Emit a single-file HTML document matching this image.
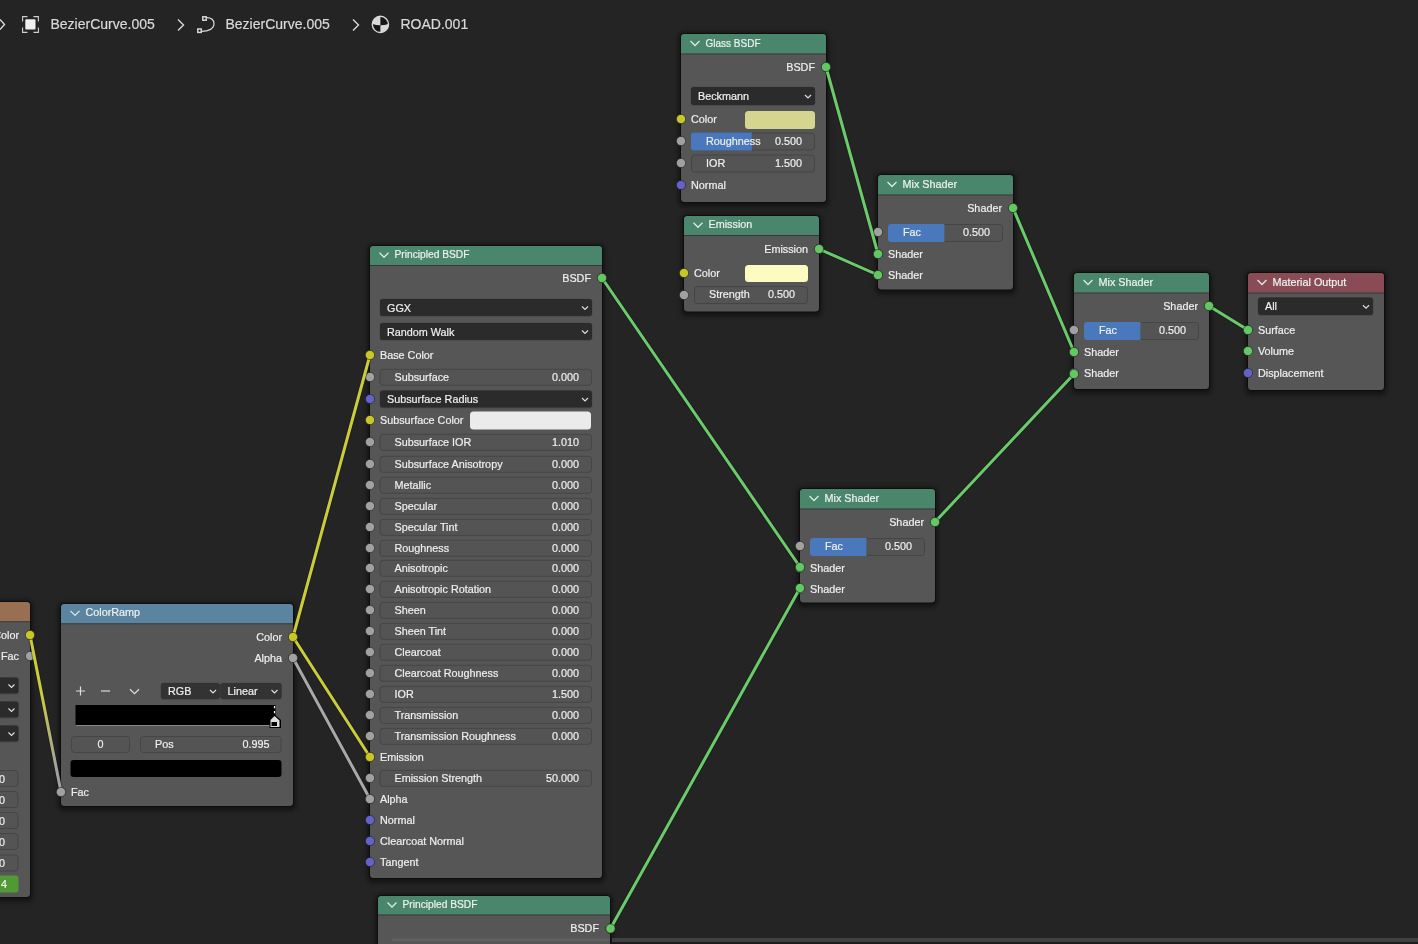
<!DOCTYPE html>
<html><head><meta charset="utf-8"><style>
html,body{margin:0;padding:0;background:#242424;width:1418px;height:944px;overflow:hidden}
svg{display:block;font-family:"Liberation Sans", sans-serif;will-change:transform}
</style></head><body>
<svg width="1418" height="944" viewBox="0 0 1418 944">
<defs><filter id="sh" x="-20%" y="-20%" width="140%" height="140%"><feGaussianBlur stdDeviation="2"/></filter></defs>
<rect width="1418" height="944" fill="#242424"/>
<path d="M0 19.5 L4.5 24.5 L0 29.5" fill="none" stroke="#d9d9d9" stroke-width="1.4"/>
<path d="M22.6 21.5 V16.6 H27.5 M33.5 16.6 H38.4 V21.5 M38.4 27.5 V32.4 H33.5 M27.5 32.4 H22.6 V27.5" fill="none" stroke="#cfcfcf" stroke-width="1.1"/>
<rect x="25.3" y="19.2" width="10.2" height="10.3" rx="0.8" fill="#f0f0f0" />
<text x="50.5" y="29" font-size="14" fill="#d9d9d9" stroke="#d9d9d9" stroke-width="0.2" text-anchor="start" >BezierCurve.005</text>
<path d="M178 19.5 L183.5 25 L178 30.5" fill="none" stroke="#d9d9d9" stroke-width="1.4"/>
<path d="M206.5 17.6 C211.5 17.6 214 20 214 23.8 C214 28.5 209 31.4 201.5 31.4" fill="none" stroke="#d9d9d9" stroke-width="1.2"/>
<rect x="202.8" y="16.8" width="3.4" height="3.4" rx="0" fill="#111" stroke="#d9d9d9" stroke-width="1.5" />
<rect x="197.8" y="29.0" width="3.4" height="3.4" rx="0" fill="#111" stroke="#d9d9d9" stroke-width="1.5" />
<text x="225.5" y="29" font-size="14" fill="#d9d9d9" stroke="#d9d9d9" stroke-width="0.2" text-anchor="start" >BezierCurve.005</text>
<path d="M353 19.5 L358.5 25 L353 30.5" fill="none" stroke="#d9d9d9" stroke-width="1.4"/>
<circle cx="380.4" cy="24.4" r="8.1" fill="#161616" stroke="#d9d9d9" stroke-width="1.4"/>
<path d="M380.4 25.349999999999998 V16.299999999999997 A8.1 8.1 0 0 0 372.29999999999995 24.099999999999998 Q376.34999999999997 25.349999999999998 380.4 25.349999999999998 Z" fill="#d9d9d9"/>
<path d="M380.4 25.349999999999998 V32.5 A8.1 8.1 0 0 0 388.5 24.099999999999998 Q384.45 25.349999999999998 380.4 25.349999999999998 Z" fill="#d9d9d9"/>
<text x="400.5" y="29" font-size="14" fill="#d9d9d9" stroke="#d9d9d9" stroke-width="0.2" text-anchor="start" >ROAD.001</text>
<rect x="-123" y="600" width="156" height="302" rx="6" fill="#000" opacity="0.42" filter="url(#sh)"/>
<rect x="-121" y="601" width="152" height="297" rx="4.5" fill="#000" opacity="0.4"/>
<rect x="-120" y="602" width="150" height="295" rx="3.5" fill="#565656"/>
<path d="M-120 621.2 V605.5 Q-120 602 -116.5 602 H26.5 Q30 602 30 605.5 V621.2 Z" fill="#986f52"/>
<rect x="-120" y="621.2" width="150" height="1" rx="0" fill="#000" opacity="0.35"/>
<path d="M-110.5 608.85 L-106 613.35 L-101.5 608.85" fill="none" stroke="#dfe9e4" stroke-width="1.3"/>
<text x="-95.5" y="614.4" font-size="10.8" fill="#eef2f0" stroke="#eef2f0" stroke-width="0.2" text-anchor="start" ></text>
<text x="19" y="639" font-size="10.8" fill="#efefef" stroke="#efefef" stroke-width="0.2" text-anchor="end" >Color</text>
<circle cx="30" cy="635" r="4.6" fill="#c7c729" stroke="#1a1a1a" stroke-opacity="0.55" stroke-width="1"/>
<text x="19" y="660" font-size="10.8" fill="#efefef" stroke="#efefef" stroke-width="0.2" text-anchor="end" >Fac</text>
<circle cx="30" cy="656" r="4.6" fill="#a1a1a1" stroke="#1a1a1a" stroke-opacity="0.55" stroke-width="1"/>
<rect x="-100.5" y="677.0" width="119.5" height="17.5" rx="3.5" fill="#000" opacity="0.12"/>
<rect x="-100" y="677.5" width="118.5" height="16" rx="2.8" fill="#2b2b2b" />
<text x="-93" y="689.5" font-size="10.8" fill="#efefef" stroke="#efefef" stroke-width="0.2" text-anchor="start" ></text>
<path d="M8.5 684.5 L11.5 687.5 L14.5 684.5" fill="none" stroke="#dddddd" stroke-width="1.2"/>
<rect x="-100.5" y="701.0" width="119.5" height="17.5" rx="3.5" fill="#000" opacity="0.12"/>
<rect x="-100" y="701.5" width="118.5" height="16" rx="2.8" fill="#2b2b2b" />
<text x="-93" y="713.5" font-size="10.8" fill="#efefef" stroke="#efefef" stroke-width="0.2" text-anchor="start" ></text>
<path d="M8.5 708.5 L11.5 711.5 L14.5 708.5" fill="none" stroke="#dddddd" stroke-width="1.2"/>
<rect x="-100.5" y="725.0" width="119.5" height="17.5" rx="3.5" fill="#000" opacity="0.12"/>
<rect x="-100" y="725.5" width="118.5" height="16" rx="2.8" fill="#2b2b2b" />
<text x="-93" y="737.5" font-size="10.8" fill="#efefef" stroke="#efefef" stroke-width="0.2" text-anchor="start" ></text>
<path d="M8.5 732.5 L11.5 735.5 L14.5 732.5" fill="none" stroke="#dddddd" stroke-width="1.2"/>
<rect x="-99.5" y="770.5" width="117.5" height="16" rx="3" fill="#545454" stroke="#454545" stroke-width="1" />
<text x="-85" y="781.9" font-size="10.8" fill="#efefef" stroke="#efefef" stroke-width="0.2" text-anchor="start" ></text>
<text x="5.5" y="781.9" font-size="10.8" fill="#efefef" stroke="#efefef" stroke-width="0.2" text-anchor="end" ></text>
<text x="5" y="782.5" font-size="10.8" fill="#efefef" stroke="#efefef" stroke-width="0.2" text-anchor="end" >0</text>
<rect x="-99.5" y="791.5" width="117.5" height="16" rx="3" fill="#545454" stroke="#454545" stroke-width="1" />
<text x="-85" y="802.9" font-size="10.8" fill="#efefef" stroke="#efefef" stroke-width="0.2" text-anchor="start" ></text>
<text x="5.5" y="802.9" font-size="10.8" fill="#efefef" stroke="#efefef" stroke-width="0.2" text-anchor="end" ></text>
<text x="5" y="803.5" font-size="10.8" fill="#efefef" stroke="#efefef" stroke-width="0.2" text-anchor="end" >0</text>
<rect x="-99.5" y="812.5" width="117.5" height="16" rx="3" fill="#545454" stroke="#454545" stroke-width="1" />
<text x="-85" y="823.9" font-size="10.8" fill="#efefef" stroke="#efefef" stroke-width="0.2" text-anchor="start" ></text>
<text x="5.5" y="823.9" font-size="10.8" fill="#efefef" stroke="#efefef" stroke-width="0.2" text-anchor="end" ></text>
<text x="5" y="824.5" font-size="10.8" fill="#efefef" stroke="#efefef" stroke-width="0.2" text-anchor="end" >0</text>
<rect x="-99.5" y="833.5" width="117.5" height="16" rx="3" fill="#545454" stroke="#454545" stroke-width="1" />
<text x="-85" y="844.9" font-size="10.8" fill="#efefef" stroke="#efefef" stroke-width="0.2" text-anchor="start" ></text>
<text x="5.5" y="844.9" font-size="10.8" fill="#efefef" stroke="#efefef" stroke-width="0.2" text-anchor="end" ></text>
<text x="5" y="845.5" font-size="10.8" fill="#efefef" stroke="#efefef" stroke-width="0.2" text-anchor="end" >0</text>
<rect x="-99.5" y="855.0" width="117.5" height="16" rx="3" fill="#545454" stroke="#454545" stroke-width="1" />
<text x="-85" y="866.4" font-size="10.8" fill="#efefef" stroke="#efefef" stroke-width="0.2" text-anchor="start" ></text>
<text x="5.5" y="866.4" font-size="10.8" fill="#efefef" stroke="#efefef" stroke-width="0.2" text-anchor="end" ></text>
<text x="5" y="867.0" font-size="10.8" fill="#efefef" stroke="#efefef" stroke-width="0.2" text-anchor="end" >0</text>
<rect x="-100" y="875.5" width="118.5" height="17" rx="3" fill="#4f9a35" />
<text x="7" y="888" font-size="10.8" fill="#efefef" stroke="#efefef" stroke-width="0.2" text-anchor="end" >4</text>
<rect x="58" y="602" width="238" height="209" rx="6" fill="#000" opacity="0.42" filter="url(#sh)"/>
<rect x="60" y="603" width="234" height="204" rx="4.5" fill="#000" opacity="0.4"/>
<rect x="61" y="604" width="232" height="202" rx="3.5" fill="#565656"/>
<path d="M61 623.3 V607.5 Q61 604 64.5 604 H289.5 Q293 604 293 607.5 V623.3 Z" fill="#5a849f"/>
<rect x="61" y="623.3" width="232" height="1" rx="0" fill="#000" opacity="0.35"/>
<path d="M70.5 610.9 L75 615.4 L79.5 610.9" fill="none" stroke="#dfe9e4" stroke-width="1.3"/>
<text x="85.5" y="616.4499999999999" font-size="10.8" fill="#eef2f0" stroke="#eef2f0" stroke-width="0.2" text-anchor="start" >ColorRamp</text>
<text x="282" y="641" font-size="10.8" fill="#efefef" stroke="#efefef" stroke-width="0.2" text-anchor="end" >Color</text>
<circle cx="293" cy="637" r="4.6" fill="#c7c729" stroke="#1a1a1a" stroke-opacity="0.55" stroke-width="1"/>
<text x="282" y="662" font-size="10.8" fill="#efefef" stroke="#efefef" stroke-width="0.2" text-anchor="end" >Alpha</text>
<circle cx="293" cy="658" r="4.6" fill="#a1a1a1" stroke="#1a1a1a" stroke-opacity="0.55" stroke-width="1"/>
<path d="M76 691 H85 M80.5 686.5 V695.5" stroke="#dddddd" stroke-width="1.2"/>
<path d="M101 691 H110" stroke="#dddddd" stroke-width="1.2"/>
<path d="M130.0 689.25 L134.5 693.75 L139.0 689.25" fill="none" stroke="#dddddd" stroke-width="1.2"/>
<rect x="160.5" y="682.5" width="60" height="17.5" rx="3.5" fill="#000" opacity="0.12"/>
<rect x="161" y="683" width="59" height="16" rx="2.8" fill="#2b2b2b" />
<text x="168" y="695.0" font-size="10.8" fill="#efefef" stroke="#efefef" stroke-width="0.2" text-anchor="start" >RGB</text>
<path d="M210.0 690.0 L213 693.0 L216.0 690.0" fill="none" stroke="#dddddd" stroke-width="1.2"/>
<rect x="220.0" y="682.5" width="62" height="17.5" rx="3.5" fill="#000" opacity="0.12"/>
<rect x="220.5" y="683" width="61" height="16" rx="2.8" fill="#2b2b2b" />
<text x="227.5" y="695.0" font-size="10.8" fill="#efefef" stroke="#efefef" stroke-width="0.2" text-anchor="start" >Linear</text>
<path d="M271.5 690.0 L274.5 693.0 L277.5 690.0" fill="none" stroke="#dddddd" stroke-width="1.2"/>
<rect x="161" y="683" width="120.5" height="16" rx="3.5" fill="#fff" opacity="0.04"/>
<rect x="220" y="684" width="1" height="14" rx="0" fill="#3a3a3a" />
<rect x="75.5" y="705" width="200" height="21" rx="0" fill="#000000" />
<rect x="75.5" y="725" width="200" height="1" rx="0" fill="#8a8a8a" />
<path d="M274.5 706 V714.5" stroke="#ffffff" stroke-width="1.2" stroke-dasharray="2.2 2.8"/>
<path d="M269.5 728 V719.5 L274.5 714.5 L281 720 V728 Z" fill="#000"/>
<path d="M270.5 727 V720 L274.5 716 L279.5 720.5 V727 Z" fill="#dcdcdc"/>
<rect x="271.5" y="722" width="5.5" height="4" rx="0" fill="#000000" />
<rect x="71.5" y="736.5" width="58" height="16" rx="3" fill="#545454" stroke="#454545" stroke-width="1" />
<text x="86" y="747.9" font-size="10.8" fill="#efefef" stroke="#efefef" stroke-width="0.2" text-anchor="start" ></text>
<text x="117" y="747.9" font-size="10.8" fill="#efefef" stroke="#efefef" stroke-width="0.2" text-anchor="end" ></text>
<text x="100.5" y="748" font-size="10.8" fill="#efefef" stroke="#efefef" stroke-width="0.2" text-anchor="middle" >0</text>
<rect x="140.5" y="736.5" width="140.5" height="16" rx="3" fill="#545454" stroke="#454545" stroke-width="1" />
<text x="155" y="747.9" font-size="10.8" fill="#efefef" stroke="#efefef" stroke-width="0.2" text-anchor="start" >Pos</text>
<text x="269.5" y="747.9" font-size="10.8" fill="#efefef" stroke="#efefef" stroke-width="0.2" text-anchor="end" >0.995</text>
<rect x="70.5" y="760" width="211" height="17" rx="3" fill="#000000" />
<circle cx="61" cy="792" r="4.6" fill="#a1a1a1" stroke="#1a1a1a" stroke-opacity="0.55" stroke-width="1"/>
<text x="71" y="796" font-size="10.8" fill="#efefef" stroke="#efefef" stroke-width="0.2" text-anchor="start" >Fac</text>
<rect x="367" y="244" width="238" height="639" rx="6" fill="#000" opacity="0.42" filter="url(#sh)"/>
<rect x="369" y="245" width="234" height="634" rx="4.5" fill="#000" opacity="0.4"/>
<rect x="370" y="246" width="232" height="632" rx="3.5" fill="#565656"/>
<path d="M370 265 V249.5 Q370 246 373.5 246 H598.5 Q602 246 602 249.5 V265 Z" fill="#4a866b"/>
<rect x="370" y="265" width="232" height="1" rx="0" fill="#000" opacity="0.35"/>
<path d="M379.5 252.75 L384 257.25 L388.5 252.75" fill="none" stroke="#dfe9e4" stroke-width="1.3"/>
<text x="394.5" y="258.3" font-size="10.8" fill="#eef2f0" stroke="#eef2f0" stroke-width="0.2" text-anchor="start" textLength="75" lengthAdjust="spacingAndGlyphs">Principled BSDF</text>
<text x="591" y="282" font-size="10.8" fill="#efefef" stroke="#efefef" stroke-width="0.2" text-anchor="end" >BSDF</text>
<circle cx="602" cy="278" r="4.6" fill="#63c763" stroke="#1a1a1a" stroke-opacity="0.55" stroke-width="1"/>
<rect x="379.5" y="298.5" width="213" height="18.5" rx="3.5" fill="#000" opacity="0.12"/>
<rect x="380" y="299" width="212" height="17" rx="2.8" fill="#2b2b2b" />
<text x="387" y="311.5" font-size="10.8" fill="#efefef" stroke="#efefef" stroke-width="0.2" text-anchor="start" >GGX</text>
<path d="M582.0 306.5 L585 309.5 L588.0 306.5" fill="none" stroke="#dddddd" stroke-width="1.2"/>
<rect x="379.5" y="322.5" width="213" height="18.5" rx="3.5" fill="#000" opacity="0.12"/>
<rect x="380" y="323" width="212" height="17" rx="2.8" fill="#2b2b2b" />
<text x="387" y="335.5" font-size="10.8" fill="#efefef" stroke="#efefef" stroke-width="0.2" text-anchor="start" >Random Walk</text>
<path d="M582.0 330.5 L585 333.5 L588.0 330.5" fill="none" stroke="#dddddd" stroke-width="1.2"/>
<circle cx="370" cy="355" r="4.6" fill="#c7c729" stroke="#1a1a1a" stroke-opacity="0.55" stroke-width="1"/>
<text x="380" y="359" font-size="10.8" fill="#efefef" stroke="#efefef" stroke-width="0.2" text-anchor="start" >Base Color</text>
<circle cx="370" cy="377" r="4.6" fill="#a1a1a1" stroke="#1a1a1a" stroke-opacity="0.55" stroke-width="1"/>
<rect x="380.0" y="369.3" width="211.5" height="16" rx="3" fill="#545454" stroke="#454545" stroke-width="1" />
<text x="394.5" y="381.2" font-size="10.8" fill="#efefef" stroke="#efefef" stroke-width="0.2" text-anchor="start" >Subsurface</text>
<text x="579.0" y="381.2" font-size="10.8" fill="#efefef" stroke="#efefef" stroke-width="0.2" text-anchor="end" >0.000</text>
<circle cx="370" cy="399" r="4.6" fill="#6363c7" stroke="#1a1a1a" stroke-opacity="0.55" stroke-width="1"/>
<rect x="379.5" y="390.0" width="213" height="18.5" rx="3.5" fill="#000" opacity="0.12"/>
<rect x="380" y="390.5" width="212" height="17" rx="2.8" fill="#2b2b2b" />
<text x="387" y="403.0" font-size="10.8" fill="#efefef" stroke="#efefef" stroke-width="0.2" text-anchor="start" >Subsurface Radius</text>
<path d="M582.0 398.0 L585 401.0 L588.0 398.0" fill="none" stroke="#dddddd" stroke-width="1.2"/>
<circle cx="370" cy="420" r="4.6" fill="#c7c729" stroke="#1a1a1a" stroke-opacity="0.55" stroke-width="1"/>
<text x="380" y="424" font-size="10.8" fill="#efefef" stroke="#efefef" stroke-width="0.2" text-anchor="start" >Subsurface Color</text>
<rect x="470" y="411.5" width="121" height="18" rx="3.5" fill="#ebebeb" />
<circle cx="370" cy="442" r="4.6" fill="#a1a1a1" stroke="#1a1a1a" stroke-opacity="0.55" stroke-width="1"/>
<rect x="380.0" y="434.3" width="211.5" height="16" rx="3" fill="#545454" stroke="#454545" stroke-width="1" />
<text x="394.5" y="446.2" font-size="10.8" fill="#efefef" stroke="#efefef" stroke-width="0.2" text-anchor="start" >Subsurface IOR</text>
<text x="579.0" y="446.2" font-size="10.8" fill="#efefef" stroke="#efefef" stroke-width="0.2" text-anchor="end" >1.010</text>
<circle cx="370" cy="464" r="4.6" fill="#a1a1a1" stroke="#1a1a1a" stroke-opacity="0.55" stroke-width="1"/>
<rect x="380.0" y="456.3" width="211.5" height="16" rx="3" fill="#545454" stroke="#454545" stroke-width="1" />
<text x="394.5" y="468.2" font-size="10.8" fill="#efefef" stroke="#efefef" stroke-width="0.2" text-anchor="start" >Subsurface Anisotropy</text>
<text x="579.0" y="468.2" font-size="10.8" fill="#efefef" stroke="#efefef" stroke-width="0.2" text-anchor="end" >0.000</text>
<circle cx="370" cy="485" r="4.6" fill="#a1a1a1" stroke="#1a1a1a" stroke-opacity="0.55" stroke-width="1"/>
<rect x="380.0" y="477.3" width="211.5" height="16" rx="3" fill="#545454" stroke="#454545" stroke-width="1" />
<text x="394.5" y="489.2" font-size="10.8" fill="#efefef" stroke="#efefef" stroke-width="0.2" text-anchor="start" >Metallic</text>
<text x="579.0" y="489.2" font-size="10.8" fill="#efefef" stroke="#efefef" stroke-width="0.2" text-anchor="end" >0.000</text>
<circle cx="370" cy="506" r="4.6" fill="#a1a1a1" stroke="#1a1a1a" stroke-opacity="0.55" stroke-width="1"/>
<rect x="380.0" y="498.3" width="211.5" height="16" rx="3" fill="#545454" stroke="#454545" stroke-width="1" />
<text x="394.5" y="510.2" font-size="10.8" fill="#efefef" stroke="#efefef" stroke-width="0.2" text-anchor="start" >Specular</text>
<text x="579.0" y="510.2" font-size="10.8" fill="#efefef" stroke="#efefef" stroke-width="0.2" text-anchor="end" >0.000</text>
<circle cx="370" cy="527" r="4.6" fill="#a1a1a1" stroke="#1a1a1a" stroke-opacity="0.55" stroke-width="1"/>
<rect x="380.0" y="519.3" width="211.5" height="16" rx="3" fill="#545454" stroke="#454545" stroke-width="1" />
<text x="394.5" y="531.1999999999999" font-size="10.8" fill="#efefef" stroke="#efefef" stroke-width="0.2" text-anchor="start" >Specular Tint</text>
<text x="579.0" y="531.1999999999999" font-size="10.8" fill="#efefef" stroke="#efefef" stroke-width="0.2" text-anchor="end" >0.000</text>
<circle cx="370" cy="548" r="4.6" fill="#a1a1a1" stroke="#1a1a1a" stroke-opacity="0.55" stroke-width="1"/>
<rect x="380.0" y="540.3" width="211.5" height="16" rx="3" fill="#545454" stroke="#454545" stroke-width="1" />
<text x="394.5" y="552.1999999999999" font-size="10.8" fill="#efefef" stroke="#efefef" stroke-width="0.2" text-anchor="start" >Roughness</text>
<text x="579.0" y="552.1999999999999" font-size="10.8" fill="#efefef" stroke="#efefef" stroke-width="0.2" text-anchor="end" >0.000</text>
<circle cx="370" cy="568" r="4.6" fill="#a1a1a1" stroke="#1a1a1a" stroke-opacity="0.55" stroke-width="1"/>
<rect x="380.0" y="560.3" width="211.5" height="16" rx="3" fill="#545454" stroke="#454545" stroke-width="1" />
<text x="394.5" y="572.1999999999999" font-size="10.8" fill="#efefef" stroke="#efefef" stroke-width="0.2" text-anchor="start" >Anisotropic</text>
<text x="579.0" y="572.1999999999999" font-size="10.8" fill="#efefef" stroke="#efefef" stroke-width="0.2" text-anchor="end" >0.000</text>
<circle cx="370" cy="589" r="4.6" fill="#a1a1a1" stroke="#1a1a1a" stroke-opacity="0.55" stroke-width="1"/>
<rect x="380.0" y="581.3" width="211.5" height="16" rx="3" fill="#545454" stroke="#454545" stroke-width="1" />
<text x="394.5" y="593.1999999999999" font-size="10.8" fill="#efefef" stroke="#efefef" stroke-width="0.2" text-anchor="start" >Anisotropic Rotation</text>
<text x="579.0" y="593.1999999999999" font-size="10.8" fill="#efefef" stroke="#efefef" stroke-width="0.2" text-anchor="end" >0.000</text>
<circle cx="370" cy="610" r="4.6" fill="#a1a1a1" stroke="#1a1a1a" stroke-opacity="0.55" stroke-width="1"/>
<rect x="380.0" y="602.3" width="211.5" height="16" rx="3" fill="#545454" stroke="#454545" stroke-width="1" />
<text x="394.5" y="614.1999999999999" font-size="10.8" fill="#efefef" stroke="#efefef" stroke-width="0.2" text-anchor="start" >Sheen</text>
<text x="579.0" y="614.1999999999999" font-size="10.8" fill="#efefef" stroke="#efefef" stroke-width="0.2" text-anchor="end" >0.000</text>
<circle cx="370" cy="631" r="4.6" fill="#a1a1a1" stroke="#1a1a1a" stroke-opacity="0.55" stroke-width="1"/>
<rect x="380.0" y="623.3" width="211.5" height="16" rx="3" fill="#545454" stroke="#454545" stroke-width="1" />
<text x="394.5" y="635.1999999999999" font-size="10.8" fill="#efefef" stroke="#efefef" stroke-width="0.2" text-anchor="start" >Sheen Tint</text>
<text x="579.0" y="635.1999999999999" font-size="10.8" fill="#efefef" stroke="#efefef" stroke-width="0.2" text-anchor="end" >0.000</text>
<circle cx="370" cy="652" r="4.6" fill="#a1a1a1" stroke="#1a1a1a" stroke-opacity="0.55" stroke-width="1"/>
<rect x="380.0" y="644.3" width="211.5" height="16" rx="3" fill="#545454" stroke="#454545" stroke-width="1" />
<text x="394.5" y="656.1999999999999" font-size="10.8" fill="#efefef" stroke="#efefef" stroke-width="0.2" text-anchor="start" >Clearcoat</text>
<text x="579.0" y="656.1999999999999" font-size="10.8" fill="#efefef" stroke="#efefef" stroke-width="0.2" text-anchor="end" >0.000</text>
<circle cx="370" cy="673" r="4.6" fill="#a1a1a1" stroke="#1a1a1a" stroke-opacity="0.55" stroke-width="1"/>
<rect x="380.0" y="665.3" width="211.5" height="16" rx="3" fill="#545454" stroke="#454545" stroke-width="1" />
<text x="394.5" y="677.1999999999999" font-size="10.8" fill="#efefef" stroke="#efefef" stroke-width="0.2" text-anchor="start" >Clearcoat Roughness</text>
<text x="579.0" y="677.1999999999999" font-size="10.8" fill="#efefef" stroke="#efefef" stroke-width="0.2" text-anchor="end" >0.000</text>
<circle cx="370" cy="694" r="4.6" fill="#a1a1a1" stroke="#1a1a1a" stroke-opacity="0.55" stroke-width="1"/>
<rect x="380.0" y="686.3" width="211.5" height="16" rx="3" fill="#545454" stroke="#454545" stroke-width="1" />
<text x="394.5" y="698.1999999999999" font-size="10.8" fill="#efefef" stroke="#efefef" stroke-width="0.2" text-anchor="start" >IOR</text>
<text x="579.0" y="698.1999999999999" font-size="10.8" fill="#efefef" stroke="#efefef" stroke-width="0.2" text-anchor="end" >1.500</text>
<circle cx="370" cy="715" r="4.6" fill="#a1a1a1" stroke="#1a1a1a" stroke-opacity="0.55" stroke-width="1"/>
<rect x="380.0" y="707.3" width="211.5" height="16" rx="3" fill="#545454" stroke="#454545" stroke-width="1" />
<text x="394.5" y="719.1999999999999" font-size="10.8" fill="#efefef" stroke="#efefef" stroke-width="0.2" text-anchor="start" >Transmission</text>
<text x="579.0" y="719.1999999999999" font-size="10.8" fill="#efefef" stroke="#efefef" stroke-width="0.2" text-anchor="end" >0.000</text>
<circle cx="370" cy="736" r="4.6" fill="#a1a1a1" stroke="#1a1a1a" stroke-opacity="0.55" stroke-width="1"/>
<rect x="380.0" y="728.3" width="211.5" height="16" rx="3" fill="#545454" stroke="#454545" stroke-width="1" />
<text x="394.5" y="740.1999999999999" font-size="10.8" fill="#efefef" stroke="#efefef" stroke-width="0.2" text-anchor="start" >Transmission Roughness</text>
<text x="579.0" y="740.1999999999999" font-size="10.8" fill="#efefef" stroke="#efefef" stroke-width="0.2" text-anchor="end" >0.000</text>
<circle cx="370" cy="757" r="4.6" fill="#c7c729" stroke="#1a1a1a" stroke-opacity="0.55" stroke-width="1"/>
<text x="380" y="761" font-size="10.8" fill="#efefef" stroke="#efefef" stroke-width="0.2" text-anchor="start" >Emission</text>
<circle cx="370" cy="778" r="4.6" fill="#a1a1a1" stroke="#1a1a1a" stroke-opacity="0.55" stroke-width="1"/>
<rect x="380.0" y="770.3" width="211.5" height="16" rx="3" fill="#545454" stroke="#454545" stroke-width="1" />
<text x="394.5" y="782.1999999999999" font-size="10.8" fill="#efefef" stroke="#efefef" stroke-width="0.2" text-anchor="start" >Emission Strength</text>
<text x="579.0" y="782.1999999999999" font-size="10.8" fill="#efefef" stroke="#efefef" stroke-width="0.2" text-anchor="end" >50.000</text>
<circle cx="370" cy="799" r="4.6" fill="#a1a1a1" stroke="#1a1a1a" stroke-opacity="0.55" stroke-width="1"/>
<text x="380" y="803" font-size="10.8" fill="#efefef" stroke="#efefef" stroke-width="0.2" text-anchor="start" >Alpha</text>
<circle cx="370" cy="820" r="4.6" fill="#6363c7" stroke="#1a1a1a" stroke-opacity="0.55" stroke-width="1"/>
<text x="380" y="824" font-size="10.8" fill="#efefef" stroke="#efefef" stroke-width="0.2" text-anchor="start" >Normal</text>
<circle cx="370" cy="841" r="4.6" fill="#6363c7" stroke="#1a1a1a" stroke-opacity="0.55" stroke-width="1"/>
<text x="380" y="845" font-size="10.8" fill="#efefef" stroke="#efefef" stroke-width="0.2" text-anchor="start" >Clearcoat Normal</text>
<circle cx="370" cy="862" r="4.6" fill="#6363c7" stroke="#1a1a1a" stroke-opacity="0.55" stroke-width="1"/>
<text x="380" y="866" font-size="10.8" fill="#efefef" stroke="#efefef" stroke-width="0.2" text-anchor="start" >Tangent</text>
<rect x="375" y="894" width="238" height="87" rx="6" fill="#000" opacity="0.42" filter="url(#sh)"/>
<rect x="377" y="895" width="234" height="82" rx="4.5" fill="#000" opacity="0.4"/>
<rect x="378" y="896" width="232" height="80" rx="3.5" fill="#565656"/>
<path d="M378 914.5 V899.5 Q378 896 381.5 896 H606.5 Q610 896 610 899.5 V914.5 Z" fill="#4a866b"/>
<rect x="378" y="914.5" width="232" height="1" rx="0" fill="#000" opacity="0.35"/>
<path d="M387.5 902.5 L392 907.0 L396.5 902.5" fill="none" stroke="#dfe9e4" stroke-width="1.3"/>
<text x="402.5" y="908.05" font-size="10.8" fill="#eef2f0" stroke="#eef2f0" stroke-width="0.2" text-anchor="start" textLength="75" lengthAdjust="spacingAndGlyphs">Principled BSDF</text>
<text x="599" y="932" font-size="10.8" fill="#efefef" stroke="#efefef" stroke-width="0.2" text-anchor="end" >BSDF</text>
<rect x="392" y="938.5" width="218" height="2.5" rx="0" fill="#606060" />
<circle cx="610.5" cy="928.5" r="4.6" fill="#63c763" stroke="#1a1a1a" stroke-opacity="0.55" stroke-width="1"/>
<rect x="678" y="32" width="151" height="175" rx="6" fill="#000" opacity="0.42" filter="url(#sh)"/>
<rect x="680" y="33" width="147" height="170" rx="4.5" fill="#000" opacity="0.4"/>
<rect x="681" y="34" width="145" height="168" rx="3.5" fill="#565656"/>
<path d="M681 53.5 V37.5 Q681 34 684.5 34 H822.5 Q826 34 826 37.5 V53.5 Z" fill="#4a866b"/>
<rect x="681" y="53.5" width="145" height="1" rx="0" fill="#000" opacity="0.35"/>
<path d="M690.5 41.0 L695 45.5 L699.5 41.0" fill="none" stroke="#dfe9e4" stroke-width="1.3"/>
<text x="705.5" y="46.55" font-size="10.8" fill="#eef2f0" stroke="#eef2f0" stroke-width="0.2" text-anchor="start" textLength="55" lengthAdjust="spacingAndGlyphs">Glass BSDF</text>
<text x="815" y="71" font-size="10.8" fill="#efefef" stroke="#efefef" stroke-width="0.2" text-anchor="end" >BSDF</text>
<circle cx="826" cy="67" r="4.6" fill="#63c763" stroke="#1a1a1a" stroke-opacity="0.55" stroke-width="1"/>
<rect x="690.5" y="86.5" width="125" height="19.5" rx="3.5" fill="#000" opacity="0.12"/>
<rect x="691" y="87" width="124" height="18" rx="2.8" fill="#2b2b2b" />
<text x="698" y="100.0" font-size="10.8" fill="#efefef" stroke="#efefef" stroke-width="0.2" text-anchor="start" >Beckmann</text>
<path d="M805.0 95.0 L808 98.0 L811.0 95.0" fill="none" stroke="#dddddd" stroke-width="1.2"/>
<circle cx="681" cy="119" r="4.6" fill="#c7c729" stroke="#1a1a1a" stroke-opacity="0.55" stroke-width="1"/>
<text x="691" y="123" font-size="10.8" fill="#efefef" stroke="#efefef" stroke-width="0.2" text-anchor="start" >Color</text>
<rect x="745" y="111" width="70" height="18" rx="3.5" fill="#d6d58f" />
<circle cx="681" cy="141" r="4.6" fill="#a1a1a1" stroke="#1a1a1a" stroke-opacity="0.55" stroke-width="1"/>
<rect x="691.5" y="133.0" width="123" height="17" rx="3" fill="#545454" stroke="#454545" stroke-width="1" />
<path d="M751.76 132.5 H694 Q691 132.5 691 135.5 V147.5 Q691 150.5 694 150.5 H751.76 Z" fill="#4a78bc"/>
<text x="706" y="144.9" font-size="10.8" fill="#efefef" stroke="#efefef" stroke-width="0.2" text-anchor="start" >Roughness</text>
<text x="802" y="144.9" font-size="10.8" fill="#efefef" stroke="#efefef" stroke-width="0.2" text-anchor="end" >0.500</text>
<circle cx="681" cy="163" r="4.6" fill="#a1a1a1" stroke="#1a1a1a" stroke-opacity="0.55" stroke-width="1"/>
<rect x="691.5" y="155.0" width="123" height="17" rx="3" fill="#545454" stroke="#454545" stroke-width="1" />
<text x="706" y="166.9" font-size="10.8" fill="#efefef" stroke="#efefef" stroke-width="0.2" text-anchor="start" >IOR</text>
<text x="802" y="166.9" font-size="10.8" fill="#efefef" stroke="#efefef" stroke-width="0.2" text-anchor="end" >1.500</text>
<circle cx="681" cy="185" r="4.6" fill="#6363c7" stroke="#1a1a1a" stroke-opacity="0.55" stroke-width="1"/>
<text x="691" y="189" font-size="10.8" fill="#efefef" stroke="#efefef" stroke-width="0.2" text-anchor="start" >Normal</text>
<rect x="681" y="214" width="141" height="102.5" rx="6" fill="#000" opacity="0.42" filter="url(#sh)"/>
<rect x="683" y="215" width="137" height="97.5" rx="4.5" fill="#000" opacity="0.4"/>
<rect x="684" y="216" width="135" height="95.5" rx="3.5" fill="#565656"/>
<path d="M684 235 V219.5 Q684 216 687.5 216 H815.5 Q819 216 819 219.5 V235 Z" fill="#4a866b"/>
<rect x="684" y="235" width="135" height="1" rx="0" fill="#000" opacity="0.35"/>
<path d="M693.5 222.75 L698 227.25 L702.5 222.75" fill="none" stroke="#dfe9e4" stroke-width="1.3"/>
<text x="708.5" y="228.3" font-size="10.8" fill="#eef2f0" stroke="#eef2f0" stroke-width="0.2" text-anchor="start" >Emission</text>
<text x="808" y="253" font-size="10.8" fill="#efefef" stroke="#efefef" stroke-width="0.2" text-anchor="end" >Emission</text>
<circle cx="819" cy="249" r="4.6" fill="#63c763" stroke="#1a1a1a" stroke-opacity="0.55" stroke-width="1"/>
<circle cx="684" cy="273" r="4.6" fill="#c7c729" stroke="#1a1a1a" stroke-opacity="0.55" stroke-width="1"/>
<text x="694" y="277" font-size="10.8" fill="#efefef" stroke="#efefef" stroke-width="0.2" text-anchor="start" >Color</text>
<rect x="745" y="265" width="63" height="17" rx="3.5" fill="#fdfbbf" />
<circle cx="684" cy="295" r="4.6" fill="#a1a1a1" stroke="#1a1a1a" stroke-opacity="0.55" stroke-width="1"/>
<rect x="694.5" y="286.5" width="113" height="17" rx="3" fill="#545454" stroke="#454545" stroke-width="1" />
<text x="709" y="298.4" font-size="10.8" fill="#efefef" stroke="#efefef" stroke-width="0.2" text-anchor="start" >Strength</text>
<text x="795" y="298.4" font-size="10.8" fill="#efefef" stroke="#efefef" stroke-width="0.2" text-anchor="end" >0.500</text>
<rect x="875" y="173" width="141" height="121.5" rx="6" fill="#000" opacity="0.42" filter="url(#sh)"/>
<rect x="877" y="174" width="137" height="116.5" rx="4.5" fill="#000" opacity="0.4"/>
<rect x="878" y="175" width="135" height="114.5" rx="3.5" fill="#565656"/>
<path d="M878 194.5 V178.5 Q878 175 881.5 175 H1009.5 Q1013 175 1013 178.5 V194.5 Z" fill="#4a866b"/>
<rect x="878" y="194.5" width="135" height="1" rx="0" fill="#000" opacity="0.35"/>
<path d="M887.5 182.0 L892 186.5 L896.5 182.0" fill="none" stroke="#dfe9e4" stroke-width="1.3"/>
<text x="902.5" y="187.55" font-size="10.8" fill="#eef2f0" stroke="#eef2f0" stroke-width="0.2" text-anchor="start" >Mix Shader</text>
<text x="1002" y="212" font-size="10.8" fill="#efefef" stroke="#efefef" stroke-width="0.2" text-anchor="end" >Shader</text>
<circle cx="1013" cy="208" r="4.6" fill="#63c763" stroke="#1a1a1a" stroke-opacity="0.55" stroke-width="1"/>
<circle cx="878" cy="232" r="4.6" fill="#a1a1a1" stroke="#1a1a1a" stroke-opacity="0.55" stroke-width="1"/>
<rect x="888.5" y="224.5" width="114" height="17" rx="3" fill="#545454" stroke="#454545" stroke-width="1" />
<path d="M944.35 224 H891 Q888 224 888 227 V239 Q888 242 891 242 H944.35 Z" fill="#4a78bc"/>
<text x="903" y="236.4" font-size="10.8" fill="#efefef" stroke="#efefef" stroke-width="0.2" text-anchor="start" >Fac</text>
<text x="990" y="236.4" font-size="10.8" fill="#efefef" stroke="#efefef" stroke-width="0.2" text-anchor="end" >0.500</text>
<circle cx="878" cy="254" r="4.6" fill="#63c763" stroke="#1a1a1a" stroke-opacity="0.55" stroke-width="1"/>
<text x="888" y="257.8" font-size="10.8" fill="#efefef" stroke="#efefef" stroke-width="0.2" text-anchor="start" >Shader</text>
<circle cx="878" cy="275" r="4.6" fill="#63c763" stroke="#1a1a1a" stroke-opacity="0.55" stroke-width="1"/>
<text x="888" y="278.8" font-size="10.8" fill="#efefef" stroke="#efefef" stroke-width="0.2" text-anchor="start" >Shader</text>
<rect x="1071" y="271" width="141" height="123" rx="6" fill="#000" opacity="0.42" filter="url(#sh)"/>
<rect x="1073" y="272" width="137" height="118" rx="4.5" fill="#000" opacity="0.4"/>
<rect x="1074" y="273" width="135" height="116" rx="3.5" fill="#565656"/>
<path d="M1074 292.5 V276.5 Q1074 273 1077.5 273 H1205.5 Q1209 273 1209 276.5 V292.5 Z" fill="#4a866b"/>
<rect x="1074" y="292.5" width="135" height="1" rx="0" fill="#000" opacity="0.35"/>
<path d="M1083.5 280.0 L1088 284.5 L1092.5 280.0" fill="none" stroke="#dfe9e4" stroke-width="1.3"/>
<text x="1098.5" y="285.55" font-size="10.8" fill="#eef2f0" stroke="#eef2f0" stroke-width="0.2" text-anchor="start" >Mix Shader</text>
<text x="1198" y="310" font-size="10.8" fill="#efefef" stroke="#efefef" stroke-width="0.2" text-anchor="end" >Shader</text>
<circle cx="1209" cy="306" r="4.6" fill="#63c763" stroke="#1a1a1a" stroke-opacity="0.55" stroke-width="1"/>
<circle cx="1074" cy="330" r="4.6" fill="#a1a1a1" stroke="#1a1a1a" stroke-opacity="0.55" stroke-width="1"/>
<rect x="1084.5" y="322.5" width="114" height="17" rx="3" fill="#545454" stroke="#454545" stroke-width="1" />
<path d="M1140.35 322 H1087 Q1084 322 1084 325 V337 Q1084 340 1087 340 H1140.35 Z" fill="#4a78bc"/>
<text x="1099" y="334.4" font-size="10.8" fill="#efefef" stroke="#efefef" stroke-width="0.2" text-anchor="start" >Fac</text>
<text x="1186" y="334.4" font-size="10.8" fill="#efefef" stroke="#efefef" stroke-width="0.2" text-anchor="end" >0.500</text>
<circle cx="1074" cy="352" r="4.6" fill="#63c763" stroke="#1a1a1a" stroke-opacity="0.55" stroke-width="1"/>
<text x="1084" y="355.8" font-size="10.8" fill="#efefef" stroke="#efefef" stroke-width="0.2" text-anchor="start" >Shader</text>
<circle cx="1074" cy="373" r="4.6" fill="#63c763" stroke="#1a1a1a" stroke-opacity="0.55" stroke-width="1"/>
<text x="1084" y="376.8" font-size="10.8" fill="#efefef" stroke="#efefef" stroke-width="0.2" text-anchor="start" >Shader</text>
<rect x="797" y="487" width="141" height="120.5" rx="6" fill="#000" opacity="0.42" filter="url(#sh)"/>
<rect x="799" y="488" width="137" height="115.5" rx="4.5" fill="#000" opacity="0.4"/>
<rect x="800" y="489" width="135" height="113.5" rx="3.5" fill="#565656"/>
<path d="M800 508.5 V492.5 Q800 489 803.5 489 H931.5 Q935 489 935 492.5 V508.5 Z" fill="#4a866b"/>
<rect x="800" y="508.5" width="135" height="1" rx="0" fill="#000" opacity="0.35"/>
<path d="M809.5 496.0 L814 500.5 L818.5 496.0" fill="none" stroke="#dfe9e4" stroke-width="1.3"/>
<text x="824.5" y="501.55" font-size="10.8" fill="#eef2f0" stroke="#eef2f0" stroke-width="0.2" text-anchor="start" >Mix Shader</text>
<text x="924" y="526" font-size="10.8" fill="#efefef" stroke="#efefef" stroke-width="0.2" text-anchor="end" >Shader</text>
<circle cx="935" cy="522" r="4.6" fill="#63c763" stroke="#1a1a1a" stroke-opacity="0.55" stroke-width="1"/>
<circle cx="800" cy="546" r="4.6" fill="#a1a1a1" stroke="#1a1a1a" stroke-opacity="0.55" stroke-width="1"/>
<rect x="810.5" y="538.5" width="114" height="17" rx="3" fill="#545454" stroke="#454545" stroke-width="1" />
<path d="M866.35 538 H813 Q810 538 810 541 V553 Q810 556 813 556 H866.35 Z" fill="#4a78bc"/>
<text x="825" y="550.4" font-size="10.8" fill="#efefef" stroke="#efefef" stroke-width="0.2" text-anchor="start" >Fac</text>
<text x="912" y="550.4" font-size="10.8" fill="#efefef" stroke="#efefef" stroke-width="0.2" text-anchor="end" >0.500</text>
<circle cx="800" cy="568" r="4.6" fill="#63c763" stroke="#1a1a1a" stroke-opacity="0.55" stroke-width="1"/>
<text x="810" y="571.8" font-size="10.8" fill="#efefef" stroke="#efefef" stroke-width="0.2" text-anchor="start" >Shader</text>
<circle cx="800" cy="589" r="4.6" fill="#63c763" stroke="#1a1a1a" stroke-opacity="0.55" stroke-width="1"/>
<text x="810" y="592.8" font-size="10.8" fill="#efefef" stroke="#efefef" stroke-width="0.2" text-anchor="start" >Shader</text>
<rect x="1245" y="271" width="142" height="124" rx="6" fill="#000" opacity="0.42" filter="url(#sh)"/>
<rect x="1247" y="272" width="138" height="119" rx="4.5" fill="#000" opacity="0.4"/>
<rect x="1248" y="273" width="136" height="117" rx="3.5" fill="#565656"/>
<path d="M1248 292.5 V276.5 Q1248 273 1251.5 273 H1380.5 Q1384 273 1384 276.5 V292.5 Z" fill="#894c55"/>
<rect x="1248" y="292.5" width="136" height="1" rx="0" fill="#000" opacity="0.35"/>
<path d="M1257.5 280.0 L1262 284.5 L1266.5 280.0" fill="none" stroke="#dfe9e4" stroke-width="1.3"/>
<text x="1272.5" y="285.55" font-size="10.8" fill="#eef2f0" stroke="#eef2f0" stroke-width="0.2" text-anchor="start" >Material Output</text>
<rect x="1257.5" y="297.0" width="116" height="19.0" rx="3.5" fill="#000" opacity="0.12"/>
<rect x="1258" y="297.5" width="115" height="17.5" rx="2.8" fill="#2b2b2b" />
<text x="1265" y="310.25" font-size="10.8" fill="#efefef" stroke="#efefef" stroke-width="0.2" text-anchor="start" >All</text>
<path d="M1363.0 305.25 L1366 308.25 L1369.0 305.25" fill="none" stroke="#dddddd" stroke-width="1.2"/>
<circle cx="1248" cy="330" r="4.6" fill="#63c763" stroke="#1a1a1a" stroke-opacity="0.55" stroke-width="1"/>
<text x="1258" y="334" font-size="10.8" fill="#efefef" stroke="#efefef" stroke-width="0.2" text-anchor="start" >Surface</text>
<circle cx="1248" cy="351" r="4.6" fill="#63c763" stroke="#1a1a1a" stroke-opacity="0.55" stroke-width="1"/>
<text x="1258" y="355" font-size="10.8" fill="#efefef" stroke="#efefef" stroke-width="0.2" text-anchor="start" >Volume</text>
<circle cx="1248" cy="373" r="4.6" fill="#6363c7" stroke="#1a1a1a" stroke-opacity="0.55" stroke-width="1"/>
<text x="1258" y="377" font-size="10.8" fill="#efefef" stroke="#efefef" stroke-width="0.2" text-anchor="start" >Displacement</text>
<line x1="826" y1="67" x2="878" y2="254" stroke="#151515" stroke-opacity="0.4" stroke-width="4.8" stroke-linecap="round"/>
<line x1="826" y1="67" x2="878" y2="254" stroke="#6acb6a" stroke-width="3.0" stroke-linecap="round"/>
<line x1="819" y1="249" x2="878" y2="275" stroke="#151515" stroke-opacity="0.4" stroke-width="4.8" stroke-linecap="round"/>
<line x1="819" y1="249" x2="878" y2="275" stroke="#6acb6a" stroke-width="3.0" stroke-linecap="round"/>
<line x1="1013" y1="208" x2="1074" y2="352" stroke="#151515" stroke-opacity="0.4" stroke-width="4.8" stroke-linecap="round"/>
<line x1="1013" y1="208" x2="1074" y2="352" stroke="#6acb6a" stroke-width="3.0" stroke-linecap="round"/>
<line x1="935" y1="522" x2="1074" y2="374" stroke="#151515" stroke-opacity="0.4" stroke-width="4.8" stroke-linecap="round"/>
<line x1="935" y1="522" x2="1074" y2="374" stroke="#6acb6a" stroke-width="3.0" stroke-linecap="round"/>
<line x1="1209" y1="306" x2="1248" y2="330" stroke="#151515" stroke-opacity="0.4" stroke-width="4.8" stroke-linecap="round"/>
<line x1="1209" y1="306" x2="1248" y2="330" stroke="#6acb6a" stroke-width="3.0" stroke-linecap="round"/>
<line x1="602" y1="278" x2="800" y2="567" stroke="#151515" stroke-opacity="0.4" stroke-width="4.8" stroke-linecap="round"/>
<line x1="602" y1="278" x2="800" y2="567" stroke="#6acb6a" stroke-width="3.0" stroke-linecap="round"/>
<line x1="610.5" y1="928.5" x2="800" y2="588" stroke="#151515" stroke-opacity="0.4" stroke-width="4.8" stroke-linecap="round"/>
<line x1="610.5" y1="928.5" x2="800" y2="588" stroke="#6acb6a" stroke-width="3.0" stroke-linecap="round"/>
<line x1="293" y1="637" x2="370" y2="355" stroke="#151515" stroke-opacity="0.4" stroke-width="4.8" stroke-linecap="round"/>
<line x1="293" y1="637" x2="370" y2="355" stroke="#cbcc3c" stroke-width="3.0" stroke-linecap="round"/>
<line x1="293" y1="637" x2="370" y2="757" stroke="#151515" stroke-opacity="0.4" stroke-width="4.8" stroke-linecap="round"/>
<line x1="293" y1="637" x2="370" y2="757" stroke="#cbcc3c" stroke-width="3.0" stroke-linecap="round"/>
<line x1="293" y1="658" x2="370" y2="799" stroke="#151515" stroke-opacity="0.4" stroke-width="4.8" stroke-linecap="round"/>
<line x1="293" y1="658" x2="370" y2="799" stroke="#a8a8a8" stroke-width="3.0" stroke-linecap="round"/>
<line x1="30" y1="635" x2="61" y2="792" stroke="#151515" stroke-opacity="0.4" stroke-width="4.8" stroke-linecap="round"/>
<defs><linearGradient id="g349" gradientUnits="userSpaceOnUse" x1="30" y1="635" x2="61" y2="792"><stop offset="0.35" stop-color="#cbcc3c"/><stop offset="0.85" stop-color="#a1a1a1"/></linearGradient></defs>
<line x1="30" y1="635" x2="61" y2="792" stroke="url(#g349)" stroke-width="3.0" stroke-linecap="round"/>
<circle cx="826" cy="67" r="4.6" fill="#63c763" stroke="#1a1a1a" stroke-opacity="0.55" stroke-width="1"/>
<circle cx="878" cy="254" r="4.6" fill="#63c763" stroke="#1a1a1a" stroke-opacity="0.55" stroke-width="1"/>
<circle cx="819" cy="249" r="4.6" fill="#63c763" stroke="#1a1a1a" stroke-opacity="0.55" stroke-width="1"/>
<circle cx="878" cy="275" r="4.6" fill="#63c763" stroke="#1a1a1a" stroke-opacity="0.55" stroke-width="1"/>
<circle cx="1013" cy="208" r="4.6" fill="#63c763" stroke="#1a1a1a" stroke-opacity="0.55" stroke-width="1"/>
<circle cx="1074" cy="352" r="4.6" fill="#63c763" stroke="#1a1a1a" stroke-opacity="0.55" stroke-width="1"/>
<circle cx="935" cy="522" r="4.6" fill="#63c763" stroke="#1a1a1a" stroke-opacity="0.55" stroke-width="1"/>
<circle cx="1074" cy="374" r="4.6" fill="#63c763" stroke="#1a1a1a" stroke-opacity="0.55" stroke-width="1"/>
<circle cx="1209" cy="306" r="4.6" fill="#63c763" stroke="#1a1a1a" stroke-opacity="0.55" stroke-width="1"/>
<circle cx="1248" cy="330" r="4.6" fill="#63c763" stroke="#1a1a1a" stroke-opacity="0.55" stroke-width="1"/>
<circle cx="602" cy="278" r="4.6" fill="#63c763" stroke="#1a1a1a" stroke-opacity="0.55" stroke-width="1"/>
<circle cx="800" cy="567" r="4.6" fill="#63c763" stroke="#1a1a1a" stroke-opacity="0.55" stroke-width="1"/>
<circle cx="610.5" cy="928.5" r="4.6" fill="#63c763" stroke="#1a1a1a" stroke-opacity="0.55" stroke-width="1"/>
<circle cx="800" cy="588" r="4.6" fill="#63c763" stroke="#1a1a1a" stroke-opacity="0.55" stroke-width="1"/>
<circle cx="293" cy="637" r="4.6" fill="#c7c729" stroke="#1a1a1a" stroke-opacity="0.55" stroke-width="1"/>
<circle cx="370" cy="355" r="4.6" fill="#c7c729" stroke="#1a1a1a" stroke-opacity="0.55" stroke-width="1"/>
<circle cx="370" cy="757" r="4.6" fill="#c7c729" stroke="#1a1a1a" stroke-opacity="0.55" stroke-width="1"/>
<circle cx="293" cy="658" r="4.6" fill="#a1a1a1" stroke="#1a1a1a" stroke-opacity="0.55" stroke-width="1"/>
<circle cx="370" cy="799" r="4.6" fill="#a1a1a1" stroke="#1a1a1a" stroke-opacity="0.55" stroke-width="1"/>
<circle cx="30" cy="635" r="4.6" fill="#c7c729" stroke="#1a1a1a" stroke-opacity="0.55" stroke-width="1"/>
<circle cx="61" cy="792" r="4.6" fill="#a1a1a1" stroke="#1a1a1a" stroke-opacity="0.55" stroke-width="1"/>
<rect x="612" y="938" width="806" height="4" rx="0" fill="#414141" />
<rect x="612" y="942" width="806" height="2" rx="0" fill="#1c1c1c" />
</svg></body></html>
